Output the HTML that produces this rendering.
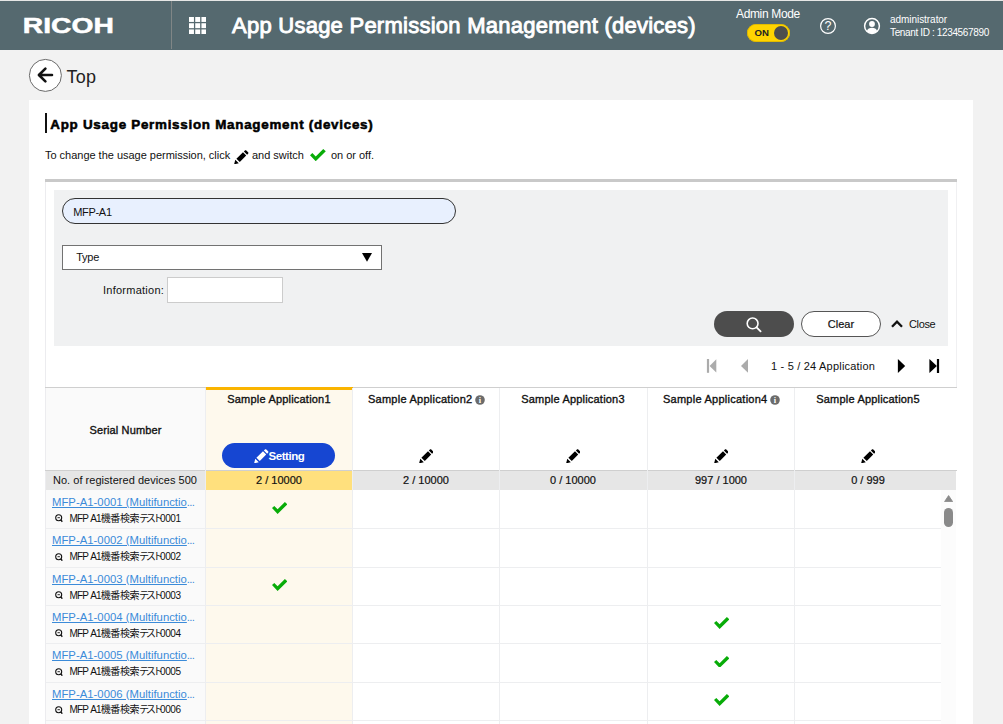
<!DOCTYPE html>
<html lang="en">
<head>
<meta charset="utf-8">
<title>App Usage Permission Management (devices)</title>
<style>
*{box-sizing:border-box;margin:0;padding:0}
html,body{width:1003px;height:724px;overflow:hidden;background:#f2f2f2;font-family:"Liberation Sans","Noto Sans CJK JP",sans-serif;color:#111;}
.abs{position:absolute;white-space:nowrap}
.t{position:absolute;white-space:nowrap;line-height:1}
.c{text-align:center}
#hdr{position:absolute;left:0;top:0;width:1003px;height:50px;background:#55696f;border-top:1px solid #e6e7e6}
#hdr .div{position:absolute;left:171px;top:0;width:1px;height:48px;background:#808686}
#hdr .title{left:232px;top:10.6px;font-size:22px;font-weight:normal;color:#fff;line-height:28px;letter-spacing:0.25px;-webkit-text-stroke:0.9px #fff}
#card{position:absolute;left:29px;top:100px;width:944px;height:624px;background:#fff}
.b{font-weight:bold}
.sb{-webkit-text-stroke:0.35px currentColor}
.w{color:#fff}
a.lk{color:#3b8bd9;text-decoration:underline;font-size:11.3px;letter-spacing:0.02px}
.el{color:#3b8bd9;font-size:11.3px;letter-spacing:-0.6px}
.sub{font-size:10px;color:#111;letter-spacing:-0.45px}
.sub .l{letter-spacing:-0.95px;word-spacing:1.4px}.sub .k{letter-spacing:-0.4px}.sub .j{letter-spacing:-3px}
.hl{position:absolute;background:#edeef0;height:1px}
.vl{position:absolute;background:#edeef0;width:1px}
</style>
</head>
<body>
<div id="hdr">
<svg class="abs" style="left:23px;top:14px" width="92" height="22" viewBox="0 0 92 22"><text x="-0.2" y="18.4" font-family="Liberation Sans, sans-serif" font-weight="bold" font-size="22" fill="#fff" stroke="#fff" stroke-width="0.5" textLength="91" lengthAdjust="spacingAndGlyphs">RICOH</text></svg>
<div class="div"></div>
<svg class="abs" style="left:188.9px;top:15.8px" width="17.4" height="17.4" viewBox="0 0 17.6 17.6" fill="#fff"><rect x="0" y="0" width="5" height="5"/><rect x="6.3" y="0" width="5" height="5"/><rect x="12.6" y="0" width="5" height="5"/><rect x="0" y="6.3" width="5" height="5"/><rect x="6.3" y="6.3" width="5" height="5"/><rect x="12.6" y="6.3" width="5" height="5"/><rect x="0" y="12.6" width="5" height="5"/><rect x="6.3" y="12.6" width="5" height="5"/><rect x="12.6" y="12.6" width="5" height="5"/></svg>
<div class="abs title">App Usage Permission Management (devices)</div>
<div class="t w" style="left:736px;top:7px;font-size:12px;letter-spacing:-0.35px">Admin Mode</div>
<div class="abs" style="left:746.5px;top:23.2px;width:43px;height:17.4px;border-radius:9px;background:#ffd400;box-shadow:inset 0 0 0 0.8px #d9b400"><span class="t b" style="left:8px;top:4.2px;font-size:9.6px;color:#222">ON</span><span class="abs" style="right:1.8px;top:1.9px;width:13.6px;height:13.6px;border-radius:7px;background:#4d4d4d"></span></div>
<svg class="abs" style="left:818.5px;top:15.7px" width="18" height="18" viewBox="0 0 18 18"><circle cx="9" cy="9" r="7.4" fill="none" stroke="#fff" stroke-width="1.2"/><text x="9" y="13.4" text-anchor="middle" font-family="Liberation Sans, sans-serif" font-size="12.5" fill="#fff">?</text></svg>
<svg class="abs" style="left:863px;top:16px" width="18" height="18" viewBox="0 0 18 18"><circle cx="9" cy="9" r="7.4" fill="none" stroke="#fff" stroke-width="1.5"/><circle cx="9" cy="7" r="2.9" fill="#fff"/><path d="M3.8 14.2 C4.6 11.6 6.6 10.8 9 10.8 C11.4 10.8 13.4 11.6 14.2 14.2 C12.8 15.6 11 16.3 9 16.3 C7 16.3 5.2 15.6 3.8 14.2 Z" fill="#fff"/></svg>
<div class="t w" style="left:890px;top:14px;font-size:10px;letter-spacing:-0.05px">administrator</div>
<div class="t w" style="left:890px;top:26.5px;font-size:10px;letter-spacing:-0.36px">Tenant ID : 1234567890</div>
</div>
<svg class="abs" style="left:28px;top:58px" width="35" height="35" viewBox="0 0 35 35"><circle cx="17.4" cy="17.4" r="16" fill="#fff" stroke="#6a6a6a" stroke-width="1"/><path d="M24 17 H11.2 M17.4 10.6 L10.9 17 L17.4 23.4" fill="none" stroke="#111" stroke-width="2.6" stroke-linecap="round" stroke-linejoin="round"/></svg>
<div class="t" style="left:66.5px;top:68.2px;font-size:18px;color:#222;letter-spacing:0.3px">Top</div>
<div id="card"></div>
<div class="abs" style="left:45px;top:113px;width:2px;height:20px;background:#111"></div>
<div class="t b" id="ctitle" style="left:50.3px;top:117.6px;font-size:13.4px;letter-spacing:0.73px;color:#000;-webkit-text-stroke:0.55px #000">App Usage Permission Management (devices)</div>
<div class="t" style="left:45px;top:150px;font-size:11px;letter-spacing:-0.02px">To change the usage permission, click</div>
<svg class="abs" style="left:234px;top:149.5px" width="14.5" height="14.5" viewBox="0 0 14.5 14.5" fill="#000"><path d="M0.1 14.4 L1.3 9.7 L4.8 13.2 Z M2.4 8.7 L9.0 2.3 L12.2 5.5 L5.8 12.1 Z M9.9 1.5 L10.9 0.5 C11.3 0.1 11.9 0.1 12.3 0.5 L14.1 2.3 C14.5 2.7 14.5 3.3 14.1 3.7 L13.1 4.7 Z"/></svg>
<div class="t" style="left:252px;top:150px;font-size:11px;letter-spacing:-0.02px">and switch</div>
<svg class="abs" style="left:310px;top:149.2px" width="15.8" height="12.21" viewBox="0 0 15.4 11.9" fill="#08ac08"><path d="M0 6.1 L2.3 3.9 L5.6 7.2 L12.9 0 L15.4 2.3 L5.6 11.9 Z"/></svg>
<div class="t" style="left:331px;top:150px;font-size:11px;letter-spacing:-0.02px">on or off.</div>
<div class="abs" style="left:45px;top:179px;width:912px;height:3px;background:#c9c9c9"></div>
<div class="abs" style="left:45px;top:182px;width:1px;height:542px;background:#ececef"></div>
<div class="abs" style="left:956px;top:182px;width:1px;height:205px;background:#f0f0f2"></div>
<div class="abs" style="left:54px;top:190px;width:894px;height:156px;background:#f0f1f2"></div>
<div class="abs" style="left:62px;top:198px;width:394px;height:26px;border:1px solid #333;border-radius:13px;background:#e8f0fe"><span class="t" style="left:10.2px;top:8px;font-size:11px;letter-spacing:-0.3px">MFP-A1</span></div>
<div class="abs" style="left:62px;top:245px;width:320px;height:25px;border:1px solid #727272;background:#fff"><span class="t" style="left:13.3px;top:6px;font-size:11px;letter-spacing:-0.3px">Type</span><svg class="abs" style="left:298.6px;top:7.3px" width="10" height="9" viewBox="0 0 10 9"><path d="M0 0 H10 L5 8.8 Z" fill="#000"/></svg></div>
<div class="t" style="left:103px;top:285px;font-size:11px;letter-spacing:0.25px">Information:</div>
<div class="abs" style="left:167px;top:277px;width:116px;height:26px;border:1px solid #ccc;background:#fff"></div>
<div class="abs" style="left:714px;top:311px;width:80px;height:26px;border-radius:13px;background:#4d4d4d"><svg class="abs" style="left:31px;top:5px" width="18" height="18" viewBox="0 0 18 18"><circle cx="7.6" cy="7.4" r="5.4" fill="none" stroke="#fff" stroke-width="1.6"/><path d="M11.6 11.4 L15.6 15.4" stroke="#fff" stroke-width="1.8" stroke-linecap="round"/></svg></div>
<div class="abs" style="left:801px;top:311px;width:80px;height:26px;border-radius:13px;background:#fff;border:1px solid #555"><span class="t c" style="left:0;width:78px;top:7px;font-size:11px;-webkit-text-stroke:0.2px #111">Clear</span></div>
<svg class="abs" style="left:890px;top:319px" width="14" height="10" viewBox="0 0 14 10"><path d="M2 7.7 L7 2.7 L12 7.7" fill="none" stroke="#111" stroke-width="2.3"/></svg>
<div class="t" style="left:909px;top:319px;font-size:11px;letter-spacing:-0.35px">Close</div>
<svg class="abs" style="left:706px;top:359px" width="12" height="14" viewBox="0 0 12 14" fill="#ababab"><rect x="0.9" y="0" width="2.2" height="13.8"/><path d="M10.3 0.2 V13.6 L3.6 6.9 Z"/></svg>
<svg class="abs" style="left:741px;top:359px" width="8" height="14" viewBox="0 0 8 14" fill="#ababab"><path d="M7 0 V13.8 L0 6.9 Z"/></svg>
<div class="t" style="left:771px;top:361px;font-size:11px;letter-spacing:0.2px">1 - 5 / 24 Application</div>
<svg class="abs" style="left:897px;top:359px" width="9" height="14" viewBox="0 0 9 14" fill="#000"><path d="M0.9 0 V14 L8.2 7 Z"/></svg>
<svg class="abs" style="left:929px;top:359px" width="11" height="14" viewBox="0 0 11 14" fill="#000"><rect x="7.9" y="0" width="2.2" height="14"/><path d="M0.4 0 V14 L7.9 7 Z"/></svg>
<div class="abs" style="left:45px;top:387px;width:912px;height:1px;background:#cfcfcf"></div>
<div class="abs" style="left:46px;top:388px;width:160px;height:83px;background:#fafafa"></div>
<div class="abs" style="left:206px;top:388px;width:147px;height:336px;background:#fef9ed"></div>
<div class="abs" style="left:206px;top:387px;width:147px;height:3px;background:#fab400"></div>
<div class="abs" style="left:46px;top:490px;width:160px;height:234px;background:#fafafa"></div>
<div class="abs" style="left:45px;top:470px;width:912px;height:1px;background:#cfcfcf"></div>
<div class="abs" style="left:46px;top:471px;width:910px;height:19px;background:#e6e6e6"></div>
<div class="abs" style="left:206px;top:471px;width:147px;height:19px;background:#ffe07d"></div>
<div class="vl" style="left:205px;top:388px;height:336px"></div>
<div class="vl" style="left:352px;top:388px;height:336px"></div>
<div class="vl" style="left:499px;top:388px;height:336px"></div>
<div class="vl" style="left:647px;top:388px;height:336px"></div>
<div class="vl" style="left:794px;top:388px;height:336px"></div>
<div class="abs" style="left:941px;top:490px;width:15px;height:234px;background:#fcfcfc"></div>
<div class="t sb c" style="left:46px;width:159px;top:425px;font-size:11px;letter-spacing:0.12px">Serial Number</div>
<div class="t sb c" style="left:209px;width:140px;top:394px;font-size:11px;letter-spacing:0.2px">Sample Application1</div>
<div class="abs" style="left:222px;top:443px;width:113px;height:25px;border-radius:13px;background:#1646d2"><svg class="abs" style="left:32px;top:5.6px" width="14.5" height="14.5" viewBox="0 0 14.5 14.5" fill="#fff"><path d="M0.1 14.4 L1.3 9.7 L4.8 13.2 Z M2.4 8.7 L9.0 2.3 L12.2 5.5 L5.8 12.1 Z M9.9 1.5 L10.9 0.5 C11.3 0.1 11.9 0.1 12.3 0.5 L14.1 2.3 C14.5 2.7 14.5 3.3 14.1 3.7 L13.1 4.7 Z"/></svg><span class="t b w" style="left:46.5px;top:7.8px;font-size:11.5px;letter-spacing:-0.45px">Setting</span></div>
<div class="t c" style="left:209px;width:140px;top:475px;font-size:11px;-webkit-text-stroke:0.2px #111">2 / 10000</div>
<div class="t sb" style="left:368px;top:394px;font-size:11px;letter-spacing:0.25px">Sample Application2</div>
<svg class="abs" style="left:474.8px;top:395px" width="10" height="10" viewBox="0 0 10 10"><circle cx="5" cy="5" r="4.8" fill="#6b6b6b"/><text x="5" y="7.7" text-anchor="middle" font-family="Liberation Serif, serif" font-weight="bold" font-size="8.5" fill="#fff">i</text></svg>
<svg class="abs" style="left:418.7px;top:448.7px" width="14.5" height="14.5" viewBox="0 0 14.5 14.5" fill="#000"><path d="M0.1 14.4 L1.3 9.7 L4.8 13.2 Z M2.4 8.7 L9.0 2.3 L12.2 5.5 L5.8 12.1 Z M9.9 1.5 L10.9 0.5 C11.3 0.1 11.9 0.1 12.3 0.5 L14.1 2.3 C14.5 2.7 14.5 3.3 14.1 3.7 L13.1 4.7 Z"/></svg>
<div class="t c" style="left:356px;width:140px;top:475px;font-size:11px;-webkit-text-stroke:0.2px #111">2 / 10000</div>
<div class="t sb c" style="left:503px;width:140px;top:394px;font-size:11px;letter-spacing:0.2px">Sample Application3</div>
<svg class="abs" style="left:565.7px;top:448.7px" width="14.5" height="14.5" viewBox="0 0 14.5 14.5" fill="#000"><path d="M0.1 14.4 L1.3 9.7 L4.8 13.2 Z M2.4 8.7 L9.0 2.3 L12.2 5.5 L5.8 12.1 Z M9.9 1.5 L10.9 0.5 C11.3 0.1 11.9 0.1 12.3 0.5 L14.1 2.3 C14.5 2.7 14.5 3.3 14.1 3.7 L13.1 4.7 Z"/></svg>
<div class="t c" style="left:503px;width:140px;top:475px;font-size:11px;-webkit-text-stroke:0.2px #111">0 / 10000</div>
<div class="t sb" style="left:663px;top:394px;font-size:11px;letter-spacing:0.25px">Sample Application4</div>
<svg class="abs" style="left:769.8px;top:395px" width="10" height="10" viewBox="0 0 10 10"><circle cx="5" cy="5" r="4.8" fill="#6b6b6b"/><text x="5" y="7.7" text-anchor="middle" font-family="Liberation Serif, serif" font-weight="bold" font-size="8.5" fill="#fff">i</text></svg>
<svg class="abs" style="left:713.7px;top:448.7px" width="14.5" height="14.5" viewBox="0 0 14.5 14.5" fill="#000"><path d="M0.1 14.4 L1.3 9.7 L4.8 13.2 Z M2.4 8.7 L9.0 2.3 L12.2 5.5 L5.8 12.1 Z M9.9 1.5 L10.9 0.5 C11.3 0.1 11.9 0.1 12.3 0.5 L14.1 2.3 C14.5 2.7 14.5 3.3 14.1 3.7 L13.1 4.7 Z"/></svg>
<div class="t c" style="left:651px;width:140px;top:475px;font-size:11px;-webkit-text-stroke:0.2px #111">997 / 1000</div>
<div class="t sb c" style="left:798px;width:140px;top:394px;font-size:11px;letter-spacing:0.2px">Sample Application5</div>
<svg class="abs" style="left:860.7px;top:448.7px" width="14.5" height="14.5" viewBox="0 0 14.5 14.5" fill="#000"><path d="M0.1 14.4 L1.3 9.7 L4.8 13.2 Z M2.4 8.7 L9.0 2.3 L12.2 5.5 L5.8 12.1 Z M9.9 1.5 L10.9 0.5 C11.3 0.1 11.9 0.1 12.3 0.5 L14.1 2.3 C14.5 2.7 14.5 3.3 14.1 3.7 L13.1 4.7 Z"/></svg>
<div class="t c" style="left:798px;width:140px;top:475px;font-size:11px;-webkit-text-stroke:0.2px #111">0 / 999</div>
<div class="t" style="left:53px;top:475px;font-size:11px;letter-spacing:0.03px">No. of registered devices 500</div>
<div class="hl" style="left:46px;top:528px;width:895px"></div>
<a class="t lk" style="left:52px;top:497.0px">MFP-A1-0001 (Multifunctio</a><span class="t el" style="left:186.8px;top:497.0px">...</span>
<svg class="abs" style="left:54.8px;top:514.3px" width="8" height="8.4" viewBox="0 0 8 8.4"><circle cx="3.7" cy="3.7" r="3.0" fill="none" stroke="#111" stroke-width="1.1"/><path d="M5.8 5.9 L7.3 7.7" stroke="#111" stroke-width="1.4"/><path d="M2.5 3.7 H4.9" stroke="#111" stroke-width="0.9"/></svg>
<div class="t sub" style="left:69.6px;top:513.8px"><span class="l">MFP A1</span><span class="k">機番検索</span><span class="j">テスト</span>0001</div>
<svg class="abs" style="left:271.6px;top:502.3px" width="15.4" height="11.90" viewBox="0 0 15.4 11.9" fill="#08ac08"><path d="M0 6.1 L2.3 3.9 L5.6 7.2 L12.9 0 L15.4 2.3 L5.6 11.9 Z"/></svg>
<div class="hl" style="left:46px;top:567px;width:895px"></div>
<a class="t lk" style="left:52px;top:535.3px">MFP-A1-0002 (Multifunctio</a><span class="t el" style="left:186.8px;top:535.3px">...</span>
<svg class="abs" style="left:54.8px;top:552.6px" width="8" height="8.4" viewBox="0 0 8 8.4"><circle cx="3.7" cy="3.7" r="3.0" fill="none" stroke="#111" stroke-width="1.1"/><path d="M5.8 5.9 L7.3 7.7" stroke="#111" stroke-width="1.4"/><path d="M2.5 3.7 H4.9" stroke="#111" stroke-width="0.9"/></svg>
<div class="t sub" style="left:69.6px;top:552.1px"><span class="l">MFP A1</span><span class="k">機番検索</span><span class="j">テスト</span>0002</div>
<div class="hl" style="left:46px;top:605px;width:895px"></div>
<a class="t lk" style="left:52px;top:573.7px">MFP-A1-0003 (Multifunctio</a><span class="t el" style="left:186.8px;top:573.7px">...</span>
<svg class="abs" style="left:54.8px;top:591.0px" width="8" height="8.4" viewBox="0 0 8 8.4"><circle cx="3.7" cy="3.7" r="3.0" fill="none" stroke="#111" stroke-width="1.1"/><path d="M5.8 5.9 L7.3 7.7" stroke="#111" stroke-width="1.4"/><path d="M2.5 3.7 H4.9" stroke="#111" stroke-width="0.9"/></svg>
<div class="t sub" style="left:69.6px;top:590.5px"><span class="l">MFP A1</span><span class="k">機番検索</span><span class="j">テスト</span>0003</div>
<svg class="abs" style="left:271.6px;top:579.0px" width="15.4" height="11.90" viewBox="0 0 15.4 11.9" fill="#08ac08"><path d="M0 6.1 L2.3 3.9 L5.6 7.2 L12.9 0 L15.4 2.3 L5.6 11.9 Z"/></svg>
<div class="hl" style="left:46px;top:643px;width:895px"></div>
<a class="t lk" style="left:52px;top:612.0px">MFP-A1-0004 (Multifunctio</a><span class="t el" style="left:186.8px;top:612.0px">...</span>
<svg class="abs" style="left:54.8px;top:629.3px" width="8" height="8.4" viewBox="0 0 8 8.4"><circle cx="3.7" cy="3.7" r="3.0" fill="none" stroke="#111" stroke-width="1.1"/><path d="M5.8 5.9 L7.3 7.7" stroke="#111" stroke-width="1.4"/><path d="M2.5 3.7 H4.9" stroke="#111" stroke-width="0.9"/></svg>
<div class="t sub" style="left:69.6px;top:628.8px"><span class="l">MFP A1</span><span class="k">機番検索</span><span class="j">テスト</span>0004</div>
<svg class="abs" style="left:713.6px;top:617.3px" width="15.4" height="11.90" viewBox="0 0 15.4 11.9" fill="#08ac08"><path d="M0 6.1 L2.3 3.9 L5.6 7.2 L12.9 0 L15.4 2.3 L5.6 11.9 Z"/></svg>
<div class="hl" style="left:46px;top:682px;width:895px"></div>
<a class="t lk" style="left:52px;top:650.3px">MFP-A1-0005 (Multifunctio</a><span class="t el" style="left:186.8px;top:650.3px">...</span>
<svg class="abs" style="left:54.8px;top:667.6px" width="8" height="8.4" viewBox="0 0 8 8.4"><circle cx="3.7" cy="3.7" r="3.0" fill="none" stroke="#111" stroke-width="1.1"/><path d="M5.8 5.9 L7.3 7.7" stroke="#111" stroke-width="1.4"/><path d="M2.5 3.7 H4.9" stroke="#111" stroke-width="0.9"/></svg>
<div class="t sub" style="left:69.6px;top:667.1px"><span class="l">MFP A1</span><span class="k">機番検索</span><span class="j">テスト</span>0005</div>
<svg class="abs" style="left:713.6px;top:655.6px" width="15.4" height="11.90" viewBox="0 0 15.4 11.9" fill="#08ac08"><path d="M0 6.1 L2.3 3.9 L5.6 7.2 L12.9 0 L15.4 2.3 L5.6 11.9 Z"/></svg>
<div class="hl" style="left:46px;top:720px;width:895px"></div>
<a class="t lk" style="left:52px;top:688.6px">MFP-A1-0006 (Multifunctio</a><span class="t el" style="left:186.8px;top:688.6px">...</span>
<svg class="abs" style="left:54.8px;top:705.9px" width="8" height="8.4" viewBox="0 0 8 8.4"><circle cx="3.7" cy="3.7" r="3.0" fill="none" stroke="#111" stroke-width="1.1"/><path d="M5.8 5.9 L7.3 7.7" stroke="#111" stroke-width="1.4"/><path d="M2.5 3.7 H4.9" stroke="#111" stroke-width="0.9"/></svg>
<div class="t sub" style="left:69.6px;top:705.4px"><span class="l">MFP A1</span><span class="k">機番検索</span><span class="j">テスト</span>0006</div>
<svg class="abs" style="left:713.6px;top:693.9px" width="15.4" height="11.90" viewBox="0 0 15.4 11.9" fill="#08ac08"><path d="M0 6.1 L2.3 3.9 L5.6 7.2 L12.9 0 L15.4 2.3 L5.6 11.9 Z"/></svg>
<svg class="abs" style="left:944px;top:495px" width="9.2" height="7" viewBox="0 0 9.2 7"><path d="M0.6 6.6 L4.6 0.6 L8.6 6.6 Z" fill="#8a8a8a" stroke="#8a8a8a" stroke-width="0.9" stroke-linejoin="round"/></svg>
<div class="abs" style="left:944px;top:508px;width:9.2px;height:19px;border-radius:4.6px;background:#8a8a8a"></div>
</body>
</html>
